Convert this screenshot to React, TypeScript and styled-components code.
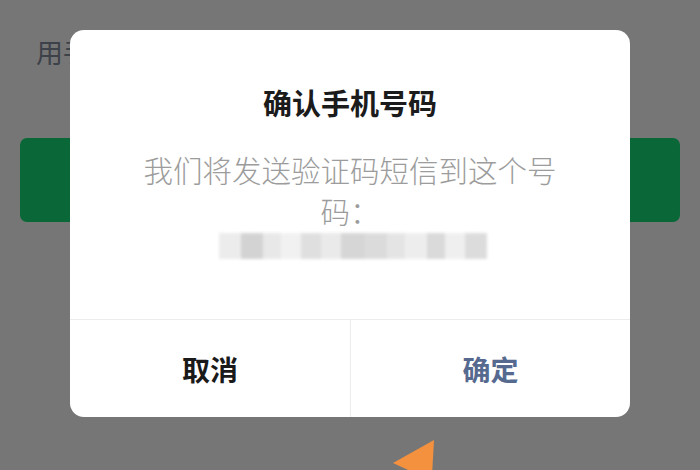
import React from 'react';
import styled, { createGlobalStyle } from 'styled-components';

const GlobalStyle = createGlobalStyle`
  html, body { margin: 0; padding: 0; }
  body {
    font-family: "Noto Sans CJK SC", "Noto Sans", sans-serif;
    background: #767676;
  }
`;

const Screen = styled.div`
  position: relative;
  width: 700px;
  height: 470px;
  overflow: hidden;
  background: #767676;
`;

const Page = styled.div`
  display: flex;
  flex-direction: column;
  padding: 30px 20px 0 36px;
`;

const Hint = styled.div`
  font-size: 27px;
  line-height: 44px;
  color: #3d4149;
`;

const PrimaryButton = styled.div`
  margin: 64px 0 0 -16px;
  height: 84px;
  border-radius: 7px;
  background: #0a6838;
`;

const Overlay = styled.div`
  position: absolute;
  left: 70px;
  top: 30px;
  width: 560px;
  height: 387px;
  background: #fff;
  border-radius: 14px;
  display: flex;
  flex-direction: column;
  overflow: hidden;
`;

const Body = styled.div`
  flex: 1;
  display: flex;
  flex-direction: column;
  align-items: center;
  padding: 52px 64px 0;
`;

const Title = styled.div`
  font-size: 29px;
  font-weight: 700;
  line-height: 40px;
  color: #1b1b1b;
`;

const Message = styled.div`
  margin-top: 27px;
  font-size: 29.5px;
  line-height: 41px;
  color: #9c9c9c;
  text-align: center;
  font-weight: 300;
`;

const Blurred = styled.div`
  display: flex;
  height: 26px;
  margin: 2px 0 0 6px;
  opacity: 0.9;
  filter: blur(1.5px);
`;

const Cell = styled.div<{ $w: number; $c: string }>`
  width: ${p => p.$w}px;
  height: 100%;
  background: ${p => p.$c};
`;

const Actions = styled.div`
  display: grid;
  grid-template-columns: 1fr 1fr;
  height: 97px;
  border-top: 1px solid #ececec;
`;

const Action = styled.div<{ $primary?: boolean }>`
  display: flex;
  align-items: center;
  justify-content: center;
  font-size: 28px;
  font-weight: 700;
  color: ${p => (p.$primary ? '#56698f' : '#1a1a1a')};
  & + & { border-left: 1px solid #ececec; }
`;

const Arrow = styled.svg`
  position: absolute;
  left: 385px;
  top: 436px;
`;

const cells: [number, string][] = [
  [22, '#eaeaea'], [22, '#cfcfcf'], [18, '#e6e6e6'], [20, '#f0f0f0'],
  [20, '#dcdcdc'], [20, '#e8e8e8'], [24, '#d2d2d2'], [22, '#d8d8d8'],
  [18, '#e2e2e2'], [22, '#ececec'], [18, '#d6d6d6'], [20, '#eeeeee'],
  [22, '#d9d9d9'],
];

export default function App() {
  return (
    <>
      <GlobalStyle />
      <Screen>
        <Page>
          <Hint>用手机号登录</Hint>
          <PrimaryButton />
        </Page>

        <Overlay>
          <Body>
            <Title>确认手机号码</Title>
            <Message>我们将发送验证码短信到这个号码：</Message>
            <Blurred>
              {cells.map(([w, c], i) => (
                <Cell key={i} $w={w} $c={c} />
              ))}
            </Blurred>
          </Body>
          <Actions>
            <Action>取消</Action>
            <Action $primary>确定</Action>
          </Actions>
        </Overlay>

        <Arrow width="60" height="40" viewBox="0 0 60 40">
          <polygon points="49,4 8,27 36,40 47,40" fill="#f3913f" />
        </Arrow>
      </Screen>
    </>
  );
}
